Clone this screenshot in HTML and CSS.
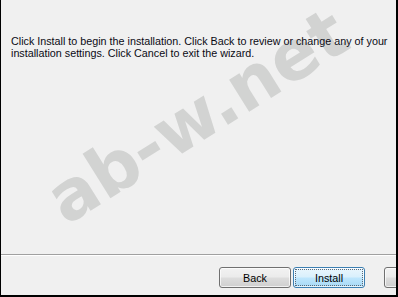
FILE: index.html
```html
<!DOCTYPE html>
<html>
<head>
<meta charset="utf-8">
<link rel="stylesheet" href="styles.css">
</head>
<body>
<div class="window">
  <svg class="watermark" width="398" height="297" viewBox="0 0 398 297">
    <text x="66" y="226" transform="rotate(-32 66 226)" class="wm-text">ab-w.net</text>
  </svg>
  <div class="main">
    <p class="message">Click Install to begin the installation. Click Back to review or change any of your installation settings. Click Cancel to exit the wizard.</p>
  </div>
  <div class="separator"></div>
  <div class="footer">
    <button class="btn">Back</button>
    <button class="btn btn-default"><span class="focus">Install</span></button>
    <button class="btn btn-cancel">Cancel</button>
  </div>
</div>
</body>
</html>
```

FILE: styles.css
```css
html, body {
  margin: 0;
  padding: 0;
  background: #f0f0f0;
}
.window {
  position: relative;
  width: 398px;
  height: 297px;
  box-sizing: border-box;
  border-left: 1px solid #000;
  border-right: 2px solid #000;
  border-bottom: 2px solid #000;
  background: #f0f0f0;
  overflow: hidden;
  display: flex;
  flex-direction: column;
  font-family: "Liberation Sans", Arial, sans-serif;
  font-size: 10px;
  color: #000;
}
.watermark {
  position: absolute;
  left: -1px;
  top: 0;
  pointer-events: none;
}
.wm-text {
  font-family: "DejaVu Sans", sans-serif;
  font-weight: bold;
  font-size: 69px;
  fill: #d2d3d2;
}
.main {
  position: relative;
  height: 254px;
  padding: 35px 0 0 10px;
  box-sizing: border-box;
}
.message {
  margin: 0;
  width: 385px;
  line-height: 12px;
  font-size: 10.75px;
  color: #0a0a14;
}
.separator {
  height: 1px;
  background: #a0a0a0;
  border-bottom: 1px solid #ffffff;
}
.footer {
  position: relative;
  display: flex;
  padding: 11px 0 0 218px;
  gap: 2px;
}
.btn {
  flex: none;
  width: 72px;
  height: 21px;
  padding: 0;
  border: 1px solid #707070;
  border-radius: 3px;
  background: linear-gradient(to bottom, #f2f2f2 0%, #ebebeb 48%, #dddddd 52%, #cfcfcf 100%);
  font-family: "Liberation Sans", Arial, sans-serif;
  font-size: 10.75px;
  color: #000;
  box-shadow: inset 0 0 0 1px rgba(255,255,255,0.7);
}
.btn-default {
  border-color: #3c7fb1;
  background: linear-gradient(to bottom, #eaf6fd 0%, #d9f0fc 48%, #bee6fd 52%, #a7d9f5 100%);
  display: flex;
  align-items: center;
  justify-content: center;
}
.focus {
  display: flex;
  align-items: center;
  justify-content: center;
  width: 66px;
  height: 15px;
  outline: 1px dotted #5a6a7a;
}
.btn-cancel {
  margin-left: 17px;
}
```
